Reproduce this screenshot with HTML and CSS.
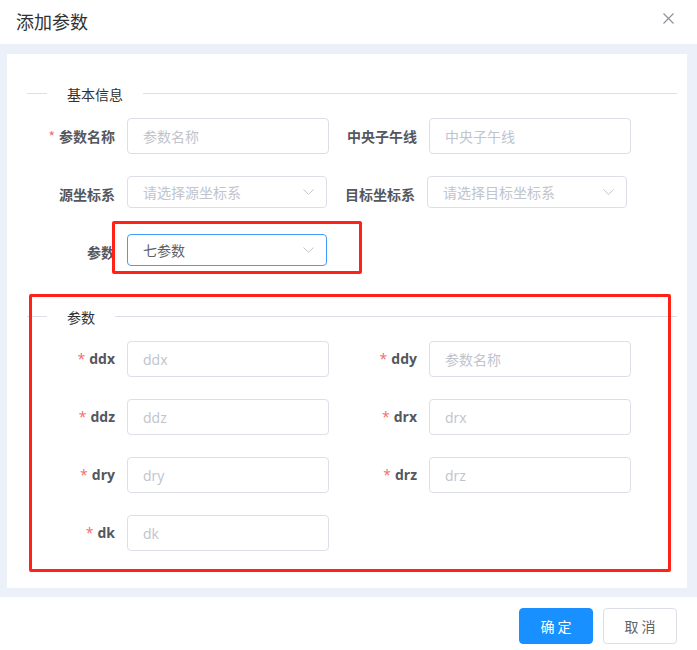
FILE: index.html
```html
<!DOCTYPE html>
<html lang="zh-CN">
<head>
<meta charset="utf-8">
<title>添加参数</title>
<link rel="stylesheet" href="styles.css">
</head>
<body>
<div class="dialog">
  <header class="dlg-header">
    <span class="dlg-title">添加参数</span>
    <span class="dlg-close">
      <svg width="11" height="11" viewBox="0 0 11 11"><path d="M0.5 0.5L10.5 10.5M10.5 0.5L0.5 10.5" stroke="#909399" stroke-width="1.2" fill="none"/></svg>
    </span>
  </header>

  <div class="dlg-body">
    <div class="panel">
      <div class="divider"><span class="divider-text">基本信息</span></div>

      <div class="row">
        <div class="item w302">
          <label class="lbl req">参数名称</label>
          <div class="input w202"><input type="text" placeholder="参数名称"></div>
        </div>
        <div class="item">
          <label class="lbl">中央子午线</label>
          <div class="input w202"><input type="text" placeholder="中央子午线"></div>
        </div>
      </div>

      <div class="row">
        <div class="item w300">
          <label class="lbl">源坐标系</label>
          <div class="select w200"><span class="ph">请选择源坐标系</span>
            <svg class="arrow" width="11" height="6" viewBox="0 0 11 6"><path d="M0.5 0.5L5.5 5.3L10.5 0.5" stroke="#c0c4cc" stroke-width="1" fill="none"/></svg>
          </div>
        </div>
        <div class="item">
          <label class="lbl">目标坐标系</label>
          <div class="select w200"><span class="ph">请选择目标坐标系</span>
            <svg class="arrow" width="11" height="6" viewBox="0 0 11 6"><path d="M0.5 0.5L5.5 5.3L10.5 0.5" stroke="#c0c4cc" stroke-width="1" fill="none"/></svg>
          </div>
        </div>
      </div>

      <div class="row">
        <div class="item w300">
          <label class="lbl">参数</label>
          <div class="select w200 active"><span class="val">七参数</span>
            <svg class="arrow" width="11" height="6" viewBox="0 0 11 6"><path d="M0.5 0.5L5.5 5.3L10.5 0.5" stroke="#c0c4cc" stroke-width="1" fill="none"/></svg>
          </div>
        </div>
      </div>

      <div class="divider"><span class="divider-text">参数</span></div>

      <div class="row">
        <div class="item w302">
          <label class="lbl req lat">ddx</label>
          <div class="input w202"><input type="text" placeholder="ddx"></div>
        </div>
        <div class="item">
          <label class="lbl req lat">ddy</label>
          <div class="input w202"><input type="text" placeholder="参数名称"></div>
        </div>
      </div>
      <div class="row">
        <div class="item w302">
          <label class="lbl req lat">ddz</label>
          <div class="input w202"><input type="text" placeholder="ddz"></div>
        </div>
        <div class="item">
          <label class="lbl req lat">drx</label>
          <div class="input w202"><input type="text" placeholder="drx"></div>
        </div>
      </div>
      <div class="row">
        <div class="item w302">
          <label class="lbl req lat">dry</label>
          <div class="input w202"><input type="text" placeholder="dry"></div>
        </div>
        <div class="item">
          <label class="lbl req lat">drz</label>
          <div class="input w202"><input type="text" placeholder="drz"></div>
        </div>
      </div>
      <div class="row">
        <div class="item w302">
          <label class="lbl req lat">dk</label>
          <div class="input w202"><input type="text" placeholder="dk"></div>
        </div>
      </div>
    </div>
  </div>

  <footer class="dlg-footer">
    <button class="btn primary">确 定</button>
    <button class="btn">取 消</button>
  </footer>

  <div class="mark mark-1"></div>
  <div class="mark mark-2"></div>
</div>
</body>
</html>
```

FILE: styles.css
```css
* { box-sizing: border-box; }
html, body { margin: 0; padding: 0; background: #fff; }
body {
  font-family: "Noto Sans CJK SC", "Noto Sans", "Liberation Sans", sans-serif;
  font-size: 14px;
  color: #606266;
}
.dialog { position: relative; width: 697px; height: 650px; background: #fff; }

.dlg-header {
  height: 44px;
  display: flex;
  align-items: flex-start;
  justify-content: space-between;
  padding: 9px 23px 0 16px;
}
.dlg-title { font-size: 18px; line-height: 24px; color: #303133; }
.dlg-close { display: block; width: 11px; height: 11px; margin-top: 4px; }
.dlg-close svg { display: block; }

.dlg-body { background: #ecf0f8; padding: 10px 10px 9px 7px; }
.panel { background: #fff; padding: 15px 10px 15px 20px; }

.divider { position: relative; height: 1px; background: #dcdfe6; margin: 24px 0; }
.divider-text {
  position: absolute; left: 20px; top: 50%; transform: translateY(-50%);
  padding: 0 20px; background: #fff; color: #303133; font-size: 14px; line-height: 20px;
}

.row { display: flex; }
.item { display: flex; height: 36px; margin-bottom: 22px; }
.w302 { width: 302px; }
.w300 { width: 300px; }
.lbl {
  width: 100px; flex: none; padding-right: 12px; text-align: right;
  line-height: 36px; font-weight: bold; color: #54575e; font-size: 14px;
}
.lbl.lat { font-family: "Open Sans", "Noto Sans", sans-serif; font-size: 14px; }
.req::before { content: "*"; color: #f56c6c; margin-right: 4px; font-weight: normal; }

.input { height: 36px; flex: none; }
.w202 { width: 202px; }
.w200 { width: 200px; }
.input input {
  width: 100%; height: 36px; border: 1px solid #dcdfe6; border-radius: 4px;
  padding: 0 15px; font-family: inherit; font-size: 14px; color: #606266; outline: none;
  background: #fff;
}
.input input::placeholder { color: #c0c4cc; }
.input input[placeholder^="d"] { font-family: "Open Sans", "Noto Sans", sans-serif; }

.select {
  height: 32px; flex: none; border: 1px solid #dcdfe6; border-radius: 4px;
  display: flex; align-items: center; justify-content: space-between;
  padding: 0 12px 0 15px; background: #fff;
}
.select.active { border-color: #409eff; }
.select .ph { color: #c0c4cc; }
.select .val { color: #606266; }
.select .arrow { display: block; }

.dlg-footer {
  display: flex; justify-content: flex-end; gap: 10px;
  padding: 11px 20px 0 0;
}
.btn {
  height: 36px; width: 74px; border: 1px solid #dcdfe6; border-radius: 4px;
  background: #fff; color: #606266; font-family: inherit; font-size: 14px; padding: 0;
}
.btn.primary { background: #1890ff; border-color: #1890ff; color: #fff; }

.mark { position: absolute; border: 3px solid #ff2218; border-radius: 2px; pointer-events: none; }
.mark-1 { left: 112px; top: 221px; width: 250px; height: 53px; }
.mark-2 { left: 29px; top: 294px; width: 642px; height: 278px; }
```
